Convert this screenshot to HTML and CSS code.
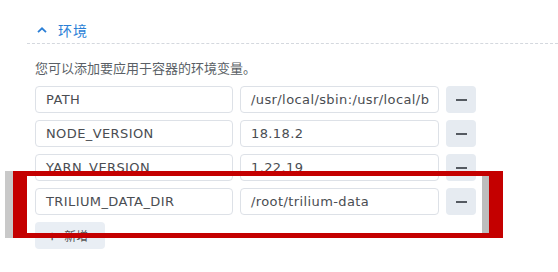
FILE: index.html
```html
<!DOCTYPE html>
<html lang="zh">
<head>
    <meta charset="UTF-8">
    <title>环境</title>
    <link rel="stylesheet" href="styles.css">
</head>
<body>
    <div class="section">
        <div class="section-header">
            <svg class="chevron" width="10" height="6" viewBox="0 0 10 6">
                <path d="M1 5.2 L5 1.3 L9 5.2" fill="none" stroke="#2b7fd6" stroke-width="1.8"/>
            </svg>
            <span class="title">环境</span>
        </div>

        <p class="desc">您可以添加要应用于容器的环境变量。</p>

        <div class="env-list">
            <div class="env-row">
                <div class="field">PATH</div>
                <div class="field">/usr/local/sbin:/usr/local/b</div>
                <button class="btn-remove"><span class="minus"></span></button>
            </div>
            <div class="env-row">
                <div class="field">NODE_VERSION</div>
                <div class="field">18.18.2</div>
                <button class="btn-remove"><span class="minus"></span></button>
            </div>
            <div class="env-row">
                <div class="field">YARN_VERSION</div>
                <div class="field">1.22.19</div>
                <button class="btn-remove"><span class="minus"></span></button>
            </div>
            <div class="env-row">
                <div class="field">TRILIUM_DATA_DIR</div>
                <div class="field">/root/trilium-data</div>
                <button class="btn-remove"><span class="minus"></span></button>
            </div>
        </div>

        <button class="btn-add"><span class="plus">+</span>新增</button>
    </div>

    <!-- highlight frame drawn over the screenshot -->
    <div class="highlight"></div>
</body>
</html>
```

FILE: styles.css
```css
body {
    margin: 0;
    background-color: #fff;
    font-family: "DejaVu Sans", "Noto Sans CJK SC", sans-serif;
    color: #555;
    position: relative;
    width: 558px;
    height: 272px;
    overflow: hidden;
}
.section {
    padding-left: 27px;
    padding-top: 18px;
}
.section-header {
    display: flex;
    align-items: center;
    height: 25px;
    padding-left: 10px;
    border-bottom: 1px dashed #d4d8de;
}
.chevron {
    margin-right: 11px;
    margin-top: -2px;
}
.title {
    font-family: "Noto Sans CJK SC", sans-serif;
    font-size: 14px;
    color: #2b7fd6;
    letter-spacing: 1px;
    margin-top: -2px;
}
.desc {
    font-family: "Noto Sans CJK SC", sans-serif;
    font-size: 13px;
    color: #5a5f66;
    margin: 15px 0 0 8px;
    line-height: 18px;
}
.env-list {
    margin: 9px 0 0 8px;
    display: flex;
    flex-direction: column;
    gap: 7px;
}
.env-row {
    display: grid;
    grid-template-columns: 198px 199px 30px;
    gap: 7px;
    height: 27px;
}
.field {
    border: 1px solid #dde1e7;
    border-radius: 4px;
    padding: 0 8px 0 10px;
    font-size: 13px;
    letter-spacing: 0.4px;
    line-height: 25px;
    color: #4a4d52;
    white-space: nowrap;
    overflow: hidden;
}
.btn-remove {
    border: none;
    border-radius: 4px;
    background-color: #e6ebf1;
    display: flex;
    align-items: center;
    justify-content: center;
    padding: 0;
}
.minus {
    width: 11px;
    height: 2px;
    background-color: #555a61;
}
.btn-add {
    margin: 7px 0 0 8px;
    height: 27px;
    width: 70px;
    border: none;
    border-radius: 4px;
    background-color: #e9eef4;
    color: #555;
    font-family: "Noto Sans CJK SC", sans-serif;
    font-size: 12px;
    display: flex;
    align-items: center;
    padding: 0 0 0 13px;
}
.plus {
    font-size: 15px;
    margin-right: 8px;
    color: #444;
}
.highlight {
    position: absolute;
    left: 13px;
    top: 171px;
    width: 462px;
    height: 57px;
    border-style: solid;
    border-color: #c40000;
    border-width: 5px 14px;
    box-shadow: -8px 0 0 #c9c9c9, inset -7px 0 0 #bdbdbd;
}
```
